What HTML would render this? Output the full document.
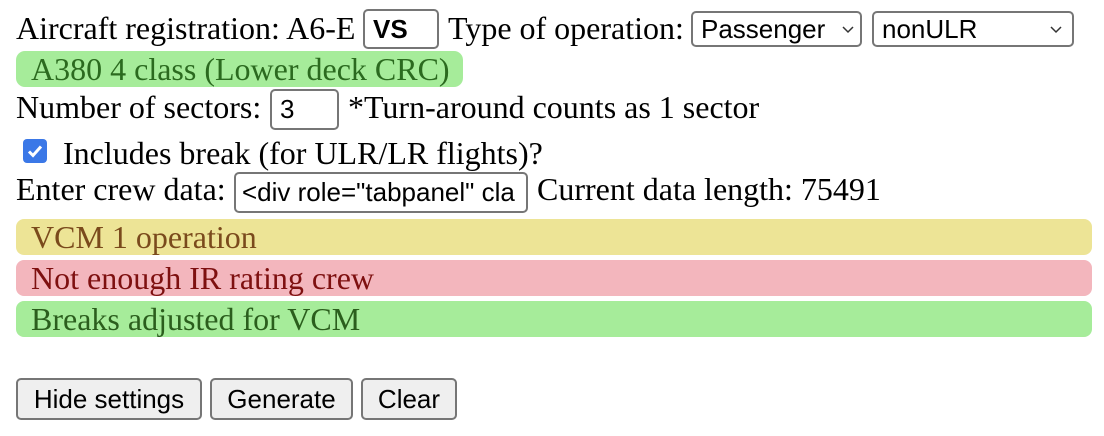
<!DOCTYPE html>
<html><head><meta charset="utf-8"><style>
body{margin:0;width:1104px;height:436px;background:#fff;position:relative;overflow:hidden;font-family:"Liberation Serif",serif;font-size:32px;color:#000}
.a{position:absolute;white-space:nowrap;line-height:36px}
.box{position:absolute;border:2px solid #767676;border-radius:5px;box-sizing:border-box;background:#fff;font-family:"Liberation Sans",sans-serif;font-size:26px;line-height:34px;padding-left:8px;white-space:nowrap;overflow:hidden}
.bar{position:absolute;left:16px;right:12px;height:36px;border-radius:8px;line-height:36px;padding-left:15px;box-sizing:border-box;white-space:nowrap}
.btn{position:absolute;top:378px;height:42px;border:2px solid #767676;border-radius:5px;background:#efefef;box-sizing:border-box;font-family:"Liberation Sans",sans-serif;font-size:26px;line-height:38px;text-align:center;white-space:nowrap}
.chev{position:absolute;top:11px}
</style></head><body>
<div class="a" style="left:16px;top:10px">Aircraft registration: A6-E</div>
<div class="box" style="left:363px;top:9px;width:76px;height:40px;font-weight:bold;line-height:36px">VS</div>
<div class="a" style="left:448px;top:10px">Type of operation:</div>
<div class="box" style="left:691px;top:11px;width:171px;height:36px;line-height:32px">Passenger<svg class="chev" style="right:6px" width="12" height="10"><path d="M1 3l5 5 5-5" stroke="#333" stroke-width="1.5" fill="none"/></svg></div>
<div class="box" style="left:872px;top:11px;width:202px;height:36px;line-height:32px">nonULR<svg class="chev" style="right:10px" width="12" height="10"><path d="M1 3l5 5 5-5" stroke="#333" stroke-width="1.5" fill="none"/></svg></div>
<div class="a" style="left:16px;top:51px;width:447px;height:36px;background:#a6ec9a;border-radius:9px;color:#2b6a1f;padding-left:15px;box-sizing:border-box">A380 4 class (Lower deck CRC)</div>
<div class="a" style="left:16px;top:89px">Number of sectors:</div>
<div class="box" style="left:270px;top:89px;width:69px;height:41px;line-height:37px">3</div>
<div class="a" style="left:348px;top:89px">*Turn-around counts as 1 sector</div>
<svg style="position:absolute;left:23px;top:139px" width="24" height="24" viewBox="0 0 24 24"><rect width="24" height="24" rx="4" fill="#3b78e7"/><path d="M6 12.5l4 4 8-9" stroke="#fff" stroke-width="3" fill="none"/></svg>
<div class="a" style="left:63px;top:135px">Includes break (for ULR/LR flights)?</div>
<div class="a" style="left:16px;top:171px">Enter crew data:</div>
<div class="box" style="left:234px;top:172px;width:294px;height:41px;line-height:37px;padding-left:6px">&lt;div role="tabpanel" cla</div>
<div class="a" style="left:537px;top:171px">Current data length: 75491</div>
<div class="bar" style="top:219px;background:#ede496;color:#7a4a1c">VCM 1 operation</div>
<div class="bar" style="top:260px;background:#f3b6bd;color:#7e1010">Not enough IR rating crew</div>
<div class="bar" style="top:301px;background:#a6ec9a;color:#2b5e1d">Breaks adjusted for VCM</div>
<div class="btn" style="left:16px;width:186px">Hide settings</div>
<div class="btn" style="left:210px;width:143px">Generate</div>
<div class="btn" style="left:361px;width:96px">Clear</div>
</body></html>
